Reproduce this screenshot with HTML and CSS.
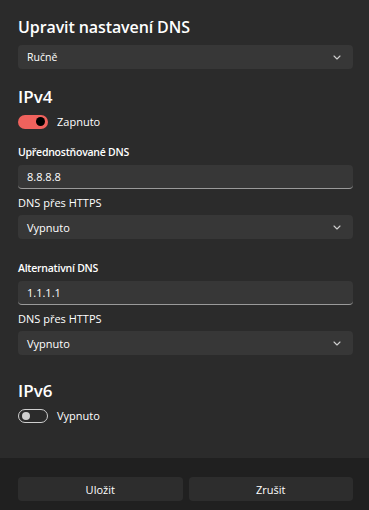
FILE: index.html
```html
<!DOCTYPE html>
<html lang="cs">
<head>
<meta charset="utf-8">
<link rel="stylesheet" href="styles.css">
</head>
<body>
<div class="dialog">
  <div class="content">
    <h1 class="title">Upravit nastavení DNS</h1>
    <div class="select first">
      <span>Ručně</span>
      <svg class="chev" width="8" height="5" viewBox="0 0 8 5"><path d="M1 1 L4 4 L7 1" fill="none" stroke="#cfcfcf" stroke-width="1.1" stroke-linecap="round" stroke-linejoin="round"/></svg>
    </div>

    <h2 class="section">IPv4</h2>
    <div class="toggle-row">
      <span class="toggle on"><span class="knob"></span></span>
      <span class="toggle-label">Zapnuto</span>
    </div>

    <div class="label strong">Upřednostňované DNS</div>
    <div class="input">8.8.8.8</div>
    <div class="label">DNS přes HTTPS</div>
    <div class="select">
      <span>Vypnuto</span>
      <svg class="chev" width="8" height="5" viewBox="0 0 8 5"><path d="M1 1 L4 4 L7 1" fill="none" stroke="#cfcfcf" stroke-width="1.1" stroke-linecap="round" stroke-linejoin="round"/></svg>
    </div>

    <div class="label strong gap">Alternativní DNS</div>
    <div class="input">1.1.1.1</div>
    <div class="label">DNS přes HTTPS</div>
    <div class="select">
      <span>Vypnuto</span>
      <svg class="chev" width="8" height="5" viewBox="0 0 8 5"><path d="M1 1 L4 4 L7 1" fill="none" stroke="#cfcfcf" stroke-width="1.1" stroke-linecap="round" stroke-linejoin="round"/></svg>
    </div>

    <h2 class="section v6">IPv6</h2>
    <div class="toggle-row">
      <span class="toggle off"><span class="knob"></span></span>
      <span class="toggle-label">Vypnuto</span>
    </div>
  </div>
  <div class="footer">
    <button class="btn">Uložit</button>
    <button class="btn">Zrušit</button>
  </div>
</div>
</body>
</html>
```
FILE: styles.css
```css
html, body {
  margin: 0;
  padding: 0;
  background: #2b2b2b;
}
body {
  font-family: "Segoe UI", "Open Sans", "Noto Sans", sans-serif;
  color: #ffffff;
  width: 369px;
  height: 510px;
  overflow: hidden;
}
.dialog {
  display: flex;
  flex-direction: column;
  height: 510px;
}
.content {
  flex: 1;
  padding: 15px 16px 0 18px;
  display: flex;
  flex-direction: column;
}
.title {
  margin: 0;
  font-size: 16px;
  font-weight: 600;
  line-height: 24px;
  height: 24px;
  letter-spacing: -0.1px;
}
.select {
  height: 24px;
  flex-shrink: 0;
  background: #373737;
  border-radius: 4px;
  display: flex;
  align-items: center;
  justify-content: space-between;
  padding: 0 12px 0 9px;
  font-size: 11px;
  color: #ffffff;
  box-sizing: border-box;
}
.select.first {
  margin-top: 6px;
  font-size: 10.5px;
}
.chev {
  display: block;
}
.section {
  margin: 17px 0 0 0;
  font-size: 17px;
  font-weight: 600;
  line-height: 22px;
  height: 22px;
}
.section.v6 {
  margin-top: 25px;
}
.toggle-row {
  display: flex;
  align-items: center;
  margin-top: 6px;
  height: 15px;
}
.toggle {
  width: 30px;
  height: 14px;
  border-radius: 8px;
  box-sizing: border-box;
  position: relative;
  display: flex;
  align-items: center;
}
.toggle.on {
  background: #f0625d;
  justify-content: flex-end;
  padding-right: 3px;
}
.toggle.on .knob {
  width: 9px;
  height: 9px;
  border-radius: 50%;
  background: #000000;
}
.toggle.off {
  border: 1px solid #cfcfcf;
  padding-left: 3px;
}
.toggle.off .knob {
  width: 8px;
  height: 8px;
  border-radius: 50%;
  background: #cfcfcf;
}
.toggle-label {
  margin-left: 9px;
  font-size: 11px;
  color: #ffffff;
}
.label {
  font-size: 11px;
  line-height: 14px;
  margin-top: 7px;
  margin-bottom: 5px;
  color: #ffffff;
}
.label.strong {
  font-weight: 600;
  font-size: 10.5px;
  letter-spacing: -0.25px;
  margin-top: 16px;
  margin-bottom: 6px;
}
.label.strong.gap {
  margin-top: 22px;
}
.input {
  height: 24px;
  flex-shrink: 0;
  background: #373737;
  border-radius: 4px;
  border-bottom: 1.5px solid #9a9a9a;
  box-sizing: border-box;
  padding: 0 9px;
  display: flex;
  align-items: center;
  font-size: 11px;
  color: #ffffff;
}
.footer {
  height: 52px;
  background: #202020;
  display: flex;
  gap: 6px;
  padding: 19px 16px 0 18px;
  box-sizing: border-box;
}
.btn {
  flex: 1;
  height: 24px;
  background: #2d2d2d;
  border: none;
  border-radius: 4px;
  color: #ffffff;
  font-family: inherit;
  font-size: 11px;
  padding: 0;
}
```
